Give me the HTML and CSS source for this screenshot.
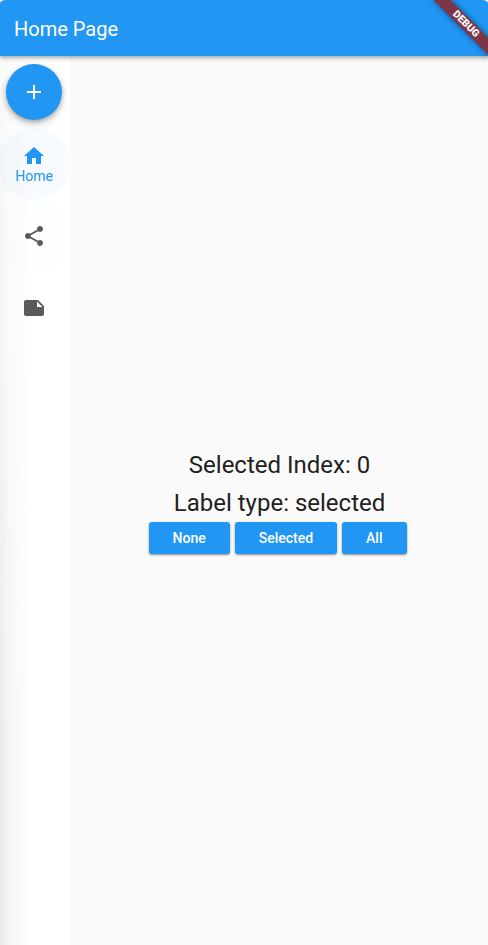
FILE: index.html
```html
<!DOCTYPE html>
<html lang="en">
<head>
<meta charset="utf-8">
<title>Home Page</title>
<link rel="stylesheet" href="styles.css">
</head>
<body>
<div class="app">
  <header class="app-bar">
    <h1 class="title">Home Page</h1>
    <div class="debug-banner">DEBUG</div>
  </header>
  <div class="body">
    <nav class="rail">
      <button class="fab" aria-label="Add"><svg viewBox="0 0 24 24"><path d="M19 13h-6v6h-2v-6H5v-2h6V5h2v6h6v2z"/></svg></button>
      <a class="destination selected"><svg viewBox="0 0 24 24"><path d="M10 20v-6h4v6h5v-8h3L12 3 2 12h3v8z"/></svg><span>Home</span></a>
      <a class="destination hovered"><svg viewBox="0 0 24 24"><path d="M18 16.080c-.76 0-1.440.3-1.960.77L8.910 12.700c.05-.23.09-.46.09-.7s-.04-.47-.09-.7l7.050-4.110c.54.5 1.250.81 2.040.81 1.660 0 3-1.340 3-3s-1.340-3-3-3-3 1.340-3 3c0 .24.04.47.09.7L8.040 9.810C7.500 9.310 6.790 9 6 9c-1.660 0-3 1.340-3 3s1.340 3 3 3c.79 0 1.500-.31 2.040-.81l7.120 4.160c-.05.21-.08.43-.08.65 0 1.610 1.310 2.920 2.920 2.920s2.920-1.310 2.920-2.920-1.310-2.920-2.920-2.920z"/></svg></a>
      <a class="destination"><svg viewBox="0 0 24 24"><path d="M4 4c-1.100 0-1.990.9-1.990 2L2 18c0 1.100.9 2 2 2h16c1.100 0 2-.9 2-2v-8l-6-6H4zm11 7V5.500l5.500 5.500H15z"/></svg></a>
    </nav>
    <main class="content">
      <p class="headline">Selected Index: 0</p>
      <p class="headline last">Label type: selected</p>
      <div class="buttons">
        <button class="button">None</button>
        <button class="button">Selected</button>
        <button class="button">All</button>
      </div>
    </main>
  </div>
</div>
</body>
</html>
```
FILE: styles.css
```css
* { box-sizing: border-box; }
body { margin: 0; background: #fff; font-family: Roboto, sans-serif; }
.app { height: 945px; display: flex; flex-direction: column; overflow: hidden; border-radius: 6px 6px 0 0 / 3px 3px 0 0; }
.app-bar { position: relative; z-index: 1; height: 56px; flex: none; display: flex; align-items: center; padding: 2px 14px 0; background: #2196f3; color: #fff; box-shadow: 0 1px 4px rgba(0,0,0,.3), 0 3px 5px rgba(0,0,0,.12); }
.title { margin: 0; font-size: 20px; font-weight: 400; line-height: 24px; }
.debug-banner { position: absolute; left: 426px; top: 18px; width: 80px; height: 12px; transform: rotate(45deg); background: #7f3548; box-shadow: 0 0 6px rgba(0,0,0,.5); font-size: 10.2px; line-height: 12px; font-weight: 900; text-align: center; }
.body { flex: 1; display: flex; background: #fafafa; }
.rail { width: 70px; flex: none; display: flex; flex-direction: column; align-items: center; padding: 8px 2px 0 0; background: linear-gradient(180deg, rgba(255,255,255,.75) 0, rgba(255,255,255,.5) 260px, rgba(255,255,255,0) 700px), linear-gradient(90deg, #eaeaea 0, #f4f4f4 8px, #fafafa 20px, #fff 34px); }
.fab { width: 56px; height: 56px; flex: none; margin: 0 0 8px; padding: 16px; border: 0; border-radius: 50%; background: #2196f3; box-shadow: 0 2px 4px rgba(0,0,0,.25), 0 4px 8px rgba(0,0,0,.16); }
svg { display: block; width: 24px; height: 24px; fill: currentColor; }
.fab svg { fill: #fff; }
.destination { width: 72px; height: 72px; flex: none; display: flex; flex-direction: column; align-items: center; justify-content: center; border-radius: 50%; color: #5a5a5a; font-size: 14px; line-height: 16px; }
.selected { color: #2196f3; background: rgba(33,150,243,.035); }
.hovered { background: rgba(33,150,243,.01); }
.content { flex: 1; display: flex; flex-direction: column; align-items: center; justify-content: center; padding: 3.5px 0 0 1px; }
.headline { margin: 0 0 10px; font-size: 24px; line-height: 28px; color: #212121; }
.last { margin-bottom: 4.5px; }
.buttons { display: flex; gap: 5px; margin-right: 4px; }
.button { height: 32px; padding: 0 24px; border: 0; border-radius: 3px; background: #2196f3; color: #fff; font: 500 14px/32px Roboto, sans-serif; box-shadow: 0 1px 2px rgba(0,0,0,.35), 0 1px 3px rgba(0,0,0,.12); }
```
